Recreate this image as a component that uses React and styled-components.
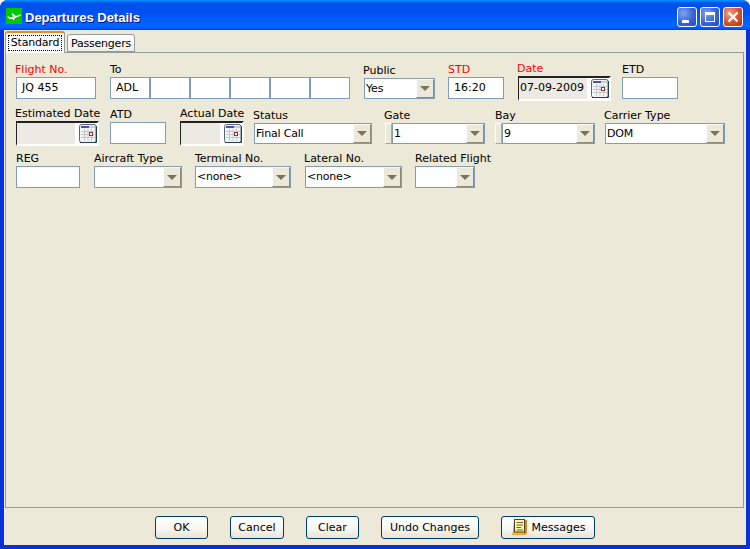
import React from 'react'
import styled, { createGlobalStyle } from 'styled-components'

const FONT = '"DejaVu Sans", "Liberation Sans", sans-serif'
const FACE = '#ece9d8'

const GlobalStyle = createGlobalStyle`
  html, body {
    margin: 0;
    padding: 0;
    background: #fff;
  }
  * { box-sizing: border-box; }
`

const Window = styled.div`
  width: 750px;
  height: 549px;
  display: flex;
  flex-direction: column;
  font: 11px ${FONT};
  color: #000;
  background: #0831d9;
  border-radius: 8px 8px 0 0;
  overflow: hidden;
`

const TitleBar = styled.div`
  height: 30px;
  flex: none;
  display: flex;
  align-items: center;
  padding: 4px 7px 0 6px;
  background: linear-gradient(180deg, #0997ff 0%, #0053ee 10%, #0050ee 40%, #0066ff 85%, #005bff 94%, #003dd7 100%);
`

const TitleIcon = styled.div`
  width: 16px;
  height: 16px;
  margin-bottom: 2px;
  display: flex;
`

const TitleText = styled.div`
  flex: 1;
  margin-left: 3px;
  color: #fff;
  font: bold 13px "Liberation Sans", sans-serif;
  text-shadow: 1px 1px 0 #0f1089;
`

const Caption = styled.div`
  width: 20px;
  height: 20px;
  margin-left: 3px;
  border: 1px solid #fff;
  border-radius: 3px;
  display: flex;
  align-items: center;
  justify-content: center;
  background: ${p => p.$close
    ? 'radial-gradient(circle at 30% 30%, #f0a080, #d8502c 55%, #b8300f)'
    : 'radial-gradient(circle at 30% 30%, #7fa0f0, #3a64d8 55%, #2448c0)'};
`

const Body = styled.div`
  flex: 1;
  margin: 0 4px 4px;
  padding: 2px 2px 0 1px;
  display: flex;
  flex-direction: column;
  background: ${FACE};
`

const TabStrip = styled.div`
  height: 20px;
  flex: none;
  display: flex;
  align-items: flex-end;
  position: relative;
  z-index: 1;
`

const Tab = styled.div`
  height: ${p => (p.$active ? '22px' : '18px')};
  width: ${p => (p.$active ? '60px' : '68px')};
  margin-bottom: ${p => (p.$active ? '-1px' : '0')};
  margin-left: ${p => (p.$active ? '0' : '2px')};
  padding: 2px;
  background: ${p => (p.$active ? '#fcfcfe' : 'linear-gradient(180deg, #fff, #f0efe6)')};
  border: 1px solid #919b9c;
  border-bottom: ${p => (p.$active ? 'none' : '1px solid #919b9c')};
  border-top: ${p => (p.$active ? '2px solid #e68b2c' : '1px solid #919b9c')};
  border-radius: 3px 3px 0 0;
  display: flex;
  align-items: center;
  justify-content: center;
`

const TabLabel = styled.span`
  flex: 1;
  align-self: stretch;
  display: flex;
  align-items: center;
  justify-content: center;
  white-space: nowrap;
  letter-spacing: -0.2px;
  padding-bottom: ${p => (p.$focus ? '2px' : '0')};
  border: ${p => (p.$focus ? '1px dotted #000' : 'none')};
`

const Panel = styled.div`
  flex: 1;
  padding: 8px 0 0 10px;
  border: 1px solid #919b9c;
  background: ${FACE};
`

const Row = styled.div`
  height: 45px;
  display: flex;
  align-items: flex-start;
`

const Field = styled.div`
  width: ${p => p.$w}px;
  margin-right: ${p => p.$gap || 0}px;
  padding-top: ${p => p.$top || 0}px;
  flex: none;
`

const Label = styled.div`
  height: 15px;
  line-height: 15px;
  margin-left: ${p => (p.$nudge ? '-1px' : '0')};
  white-space: nowrap;
  color: ${p => (p.$required ? '#ff0000' : '#000')};
`

const TextBox = styled.div`
  height: 22px;
  line-height: 20px;
  padding-left: ${p => p.$pad ?? 5}px;
  background: #fff;
  border: 1px solid #7f9db9;
  white-space: nowrap;
`

const Segments = styled.div`
  display: grid;
  grid-template-columns: repeat(6, 40px);
`

const ComboWrap = styled.div`
  display: flex;
`

const Nub = styled.div`
  width: 7px;
  height: 21px;
  flex: none;
  background: ${FACE};
  border: 1px solid;
  border-color: #fff #aca899 #aca899 #fff;
`

const Combo = styled.div`
  flex: 1;
  min-width: 0;
  height: ${p => p.$h || 22}px;
  display: flex;
  background: #fff;
  border: 1px solid #7f9db9;
`

const ComboText = styled.div`
  flex: 1;
  padding-left: 1px;
  line-height: 19px;
  letter-spacing: -0.2px;
  white-space: nowrap;
  overflow: hidden;
`

const ComboArrow = styled.div`
  width: 18px;
  flex: none;
  display: flex;
  align-items: center;
  justify-content: center;
  background: ${FACE};
  border: 1px solid;
  border-color: #fff #8e8b7a #8e8b7a #fff;
  &::after {
    content: '';
    border: 5px solid transparent;
    border-bottom: none;
    border-top: 5px solid #77735f;
  }
`

const DateBox = styled.div`
  height: 25px;
  display: flex;
  align-items: stretch;
  border: 2px solid;
  border-color: #222 #fff #fff #222;
  border-left-width: 1px;
  background: #fff;
`

const DateValue = styled.div`
  flex: 1;
  min-width: 0;
  padding-left: 1px;
  line-height: 20px;
  background: #ebeae3;
  white-space: nowrap;
  overflow: hidden;
`

const DateButton = styled.div`
  width: 22px;
  flex: none;
  display: flex;
  align-items: center;
  justify-content: flex-end;
`

const Footer = styled.div`
  height: 37px;
  flex: none;
  padding: 8px 0 0 150px;
  display: flex;
  align-items: flex-start;
`

const Button = styled.div`
  width: ${p => p.$w}px;
  height: 23px;
  margin-right: 22px;
  display: flex;
  align-items: center;
  justify-content: center;
  gap: 5px;
  white-space: nowrap;
  border: 1px solid #003c74;
  border-radius: 3px;
  background: linear-gradient(180deg, #fff 0%, #f6f5ef 60%, #e6e3d6 100%);
`

const PlaneIcon = () => (
  <svg width="16" height="16" viewBox="0 0 16 16">
    <rect width="16" height="16" fill="#00c800" />
    <path d="M1 8.5 L3 8.5 L4 9.5 L7 8.8 L5.5 5.5 L7 5.5 L10 8 L14 6.6 Q15.5 6.4 15 7.5 L9 10 L8 12.2 L6.8 12.2 L7 10.8 L3.5 11.3 Z" fill="#fff" />
  </svg>
)

const MinimizeGlyph = () => (
  <svg width="18" height="18" viewBox="0 0 18 18"><rect x="4" y="12" width="7" height="3" fill="#fff" /></svg>
)

const MaximizeGlyph = () => (
  <svg width="18" height="18" viewBox="0 0 18 18">
    <path d="M4 4 H14 V14 H4 Z M5 7 V13 H13 V7 Z" fill="#fff" fillRule="evenodd" />
  </svg>
)

const CloseGlyph = () => (
  <svg width="18" height="18" viewBox="0 0 18 18">
    <path d="M4.5 4.5 L13.5 13.5 M13.5 4.5 L4.5 13.5" stroke="#fff" strokeWidth="2.4" />
  </svg>
)

const CalendarIcon = () => (
  <svg width="18" height="20" viewBox="0 0 18 20">
    <rect x="0.5" y="0.5" width="16.5" height="18" rx="2" fill="#f4f4f4" stroke="#4f6a7c" />
    <rect x="2" y="2" width="8" height="2" fill="#5050b0" />
    <rect x="10" y="2" width="6" height="2" fill="#c8ccd8" />
    <path d="M2 7.5 H16 M2 10.5 H16 M2 13.5 H16 M5.5 5 V17 M9 5 V17 M12.5 5 V17" stroke="#c4c8cc" strokeWidth="1" />
    <rect x="10.5" y="8.5" width="3" height="3" fill="#fff" stroke="#a03030" />
    <path d="M1 18.5 H17.5 V2" stroke="#1f4058" fill="none" />
  </svg>
)

const NoteIcon = () => (
  <svg width="16" height="17" viewBox="0 0 16 17">
    <path d="M3 1 H16 V14 L14 16 H1 L2 13 Z" fill="#d88a10" />
    <rect x="3.5" y="0.5" width="10" height="12.5" fill="#fff7a0" stroke="#444" />
    <path d="M5.5 3.5 H12 M5.5 6 H12 M5.5 8.5 H10 M5.5 11 H12" stroke="#6a6a30" />
    <path d="M1.5 14.7 H13" stroke="#f6c040" strokeWidth="1.6" />
  </svg>
)

const Select = ({ value, h }) => (
  <Combo $h={h}>
    <ComboText>{value}</ComboText>
    <ComboArrow />
  </Combo>
)

const NubSelect = ({ value }) => (
  <ComboWrap>
    <Nub />
    <Select value={value} h={21} />
  </ComboWrap>
)

const DateField = ({ value }) => (
  <DateBox>
    <DateValue>{value}</DateValue>
    <DateButton><CalendarIcon /></DateButton>
  </DateBox>
)

function App () {
  return (
    <Window>
      <GlobalStyle />
      <TitleBar>
        <TitleIcon><PlaneIcon /></TitleIcon>
        <TitleText>Departures Details</TitleText>
        <Caption><MinimizeGlyph /></Caption>
        <Caption><MaximizeGlyph /></Caption>
        <Caption $close><CloseGlyph /></Caption>
      </TitleBar>
      <Body>
        <TabStrip>
          <Tab $active><TabLabel $focus>Standard</TabLabel></Tab>
          <Tab><TabLabel>Passengers</TabLabel></Tab>
        </TabStrip>
        <Panel>
          <Row>
            <Field $w={80} $gap={14} $top={1}>
              <Label $required $nudge>Flight No.</Label>
              <TextBox>JQ 455</TextBox>
            </Field>
            <Field $w={240} $gap={14} $top={1}>
              <Label>To</Label>
              <Segments>
                <TextBox>ADL</TextBox>
                <TextBox />
                <TextBox />
                <TextBox />
                <TextBox />
                <TextBox />
              </Segments>
            </Field>
            <Field $w={71} $gap={13} $top={2}>
              <Label $nudge>Public</Label>
              <Select value="Yes" h={21} />
            </Field>
            <Field $w={56} $gap={14} $top={1}>
              <Label $required>STD</Label>
              <TextBox>16:20</TextBox>
            </Field>
            <Field $w={93} $gap={11}>
              <Label $required $nudge>Date</Label>
              <DateField value="07-09-2009" />
            </Field>
            <Field $w={56} $top={1}>
              <Label>ETD</Label>
              <TextBox />
            </Field>
          </Row>
          <Row>
            <Field $w={83} $gap={11}>
              <Label $nudge>Estimated Date</Label>
              <DateField />
            </Field>
            <Field $w={56} $gap={14} $top={1}>
              <Label>ATD</Label>
              <TextBox />
            </Field>
            <Field $w={64} $gap={10}>
              <Label>Actual Date</Label>
              <DateField />
            </Field>
            <Field $w={118} $gap={13} $top={2}>
              <Label $nudge>Status</Label>
              <Select value="Final Call" h={21} />
            </Field>
            <Field $w={100} $gap={10} $top={2}>
              <Label $nudge>Gate</Label>
              <NubSelect value="1" />
            </Field>
            <Field $w={100} $gap={10} $top={2}>
              <Label>Bay</Label>
              <NubSelect value="9" />
            </Field>
            <Field $w={120} $top={2}>
              <Label $nudge>Carrier Type</Label>
              <Select value="DOM" h={21} />
            </Field>
          </Row>
          <Row>
            <Field $w={64} $gap={14}>
              <Label>REG</Label>
              <TextBox />
            </Field>
            <Field $w={88} $gap={13}>
              <Label>Aircraft Type</Label>
              <Select />
            </Field>
            <Field $w={96} $gap={14}>
              <Label>Terminal No.</Label>
              <Select value="<none>" />
            </Field>
            <Field $w={97} $gap={13}>
              <Label $nudge>Lateral No.</Label>
              <Select value="<none>" />
            </Field>
            <Field $w={60}>
              <Label>Related Flight</Label>
              <Select />
            </Field>
          </Row>
        </Panel>
        <Footer>
          <Button $w={53}>OK</Button>
          <Button $w={54}>Cancel</Button>
          <Button $w={53}>Clear</Button>
          <Button $w={98}>Undo Changes</Button>
          <Button $w={94}><NoteIcon />Messages</Button>
        </Footer>
      </Body>
    </Window>
  )
}

export default App
